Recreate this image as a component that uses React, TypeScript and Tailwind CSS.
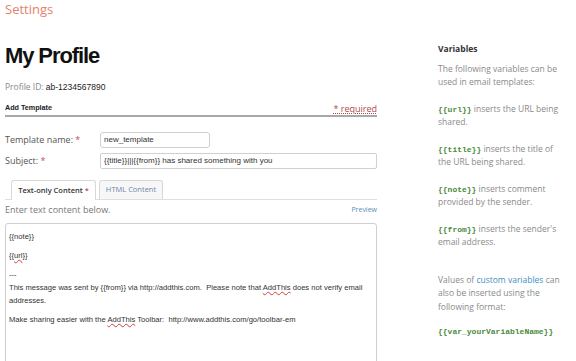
import React from 'react';

const openSans = { fontFamily: '"Open Sans", "Liberation Sans", sans-serif' };
const arial = { fontFamily: '"Liberation Sans", Arial, sans-serif' };
const mono = { fontFamily: '"Liberation Mono", "Courier New", monospace' };

const Code: React.FC<{ children: React.ReactNode }> = ({ children }) => (
  <span className="text-[8px] leading-[10px] font-bold text-[#4b8a3c]" style={mono}>
    {children}
  </span>
);

const LeftColumn: React.FC = () => (
  <div className="ml-[5px] w-[372px] shrink-0">
    <div className="h-[18px] text-[13px] leading-[18px] text-[#e5826c]" style={openSans}>
      Settings
    </div>
    <h1
      className="mt-[26px] h-[24px] text-[22px] leading-[24px] font-bold tracking-[-1.1px] text-[#111]"
      style={arial}
    >
      My Profile
    </h1>
    <div className="mt-[13px] h-[12px] text-[8.5px] leading-[12px]">
      <span className="text-[#888]" style={openSans}>Profile ID: </span>
      <span className="text-[#222]" style={arial}>ab-1234567890</span>
    </div>

    <div className="mt-[11px] flex h-[13px] items-end justify-between border-b-2 border-[#a8a8a8]">
      <span className="pb-[2px] text-[7.2px] leading-[10px] font-bold text-[#222]" style={arial}>
        Add Template
      </span>
      <span
        className="mb-px text-[9px] leading-[10px] text-[#b24a4a] underline decoration-dotted"
        style={openSans}
      >
        * required
      </span>
    </div>

    <div className="mt-[15px] flex h-[16px] items-center">
      <label className="w-[95px] text-[9px] text-[#555]" style={openSans}>
        Template name: <span className="text-[#c0504d]">*</span>
      </label>
      <div
        className="flex h-[16px] w-[110px] items-center rounded-[3px] border border-[#d0d0d0] pl-[3px] text-[8px] text-[#333]"
        style={arial}
      >
        new_template
      </div>
    </div>
    <div className="mt-[5px] flex h-[16px] items-center">
      <label className="w-[95px] text-[9px] text-[#555]" style={openSans}>
        Subject: <span className="text-[#c0504d]">*</span>
      </label>
      <div
        className="flex h-[16px] flex-1 items-center rounded-[2px] border border-[#d0d0d0] pl-[3px] text-[8px] text-[#333]"
        style={arial}
      >
        {'{{title}}|||{{from}} has shared something with you'}
      </div>
    </div>

    <div className="mt-[11px] flex h-[20px] items-end gap-[3px] border-b border-[#dedede] pl-[6px]">
      <div
        className="-mb-px flex h-[20px] w-[85px] items-center justify-center rounded-t-[3px] border border-b-0 border-[#d8d8d8] bg-white text-[7.5px] font-semibold text-[#333]"
        style={openSans}
      >
        Text-only Content <span className="ml-[2px] text-[#c0504d]">*</span>
      </div>
      <div
        className="flex h-[19px] w-[64px] items-center justify-center rounded-t-[3px] border border-b-0 border-[#d8d8d8] bg-[#f7f7f7] text-[7.5px] text-[#6d86a8]"
        style={openSans}
      >
        HTML Content
      </div>
    </div>

    <div className="mt-[4px] flex h-[12px] items-center justify-between">
      <span className="text-[9px] text-[#777]" style={openSans}>
        Enter text content below.
      </span>
      <span className="text-[7px] text-[#5b8db5]" style={openSans}>
        Preview
      </span>
    </div>

    <div
      className="mt-[7px] h-[150px] rounded-t-[3px] border border-[#cfcfcf] px-[3px] pt-[6px] text-[7.6px] leading-[13px] text-[#333] whitespace-nowrap"
      style={arial}
    >
      <p className="mb-[6px]">{'{{note}}'}</p>
      <p className="mb-[6px]">
        {'{{'}
        <span className="underline decoration-wavy decoration-[#d04040]">url</span>
        {'}}'}
      </p>
      <p>---</p>
      <p className="mb-[6px]">
        This message was sent by {'{{from}}'} via http://addthis.com.&nbsp; Please note that{' '}
        <span className="underline decoration-wavy decoration-[#d04040]">AddThis</span> does not verify email
        <br />
        addresses.
      </p>
      <p>
        Make sharing easier with the{' '}
        <span className="underline decoration-wavy decoration-[#d04040]">AddThis</span> Toolbar:&nbsp;
        http://www.addthis.com/go/toolbar-em
      </p>
    </div>
  </div>
);

const RightColumn: React.FC = () => (
  <div
    className="ml-[61px] mt-[42px] w-[135px] whitespace-nowrap text-[8.5px] leading-[13.5px] text-[#8a8a8a]"
    style={openSans}
  >
    <div className="mb-[6px] font-bold text-[#333]">Variables</div>
    <p className="mb-[13px]">
      The following variables can be
      <br />
      used in email templates:
    </p>
    <p className="mb-[13px]">
      <Code>{'{{url}}'}</Code> inserts the URL being
      <br />
      shared.
    </p>
    <p className="mb-[13px]">
      <Code>{'{{title}}'}</Code> inserts the title of
      <br />
      the URL being shared.
    </p>
    <p className="mb-[13px]">
      <Code>{'{{note}}'}</Code> inserts comment
      <br />
      provided by the sender.
    </p>
    <p className="mb-[24px]">
      <Code>{'{{from}}'}</Code> inserts the sender's
      <br />
      email address.
    </p>
    <p className="mb-[11px]">
      Values of <span className="text-[#3d8fc6]">custom variables</span> can
      <br />
      also be inserted using the
      <br />
      following format:
    </p>
    <p>
      <Code>{'{{var_yourVariableName}}'}</Code>
    </p>
  </div>
);

export default function App() {
  return (
    <div className="flex h-[361px] w-[576px] overflow-hidden bg-white">
      <LeftColumn />
      <RightColumn />
    </div>
  );
}
